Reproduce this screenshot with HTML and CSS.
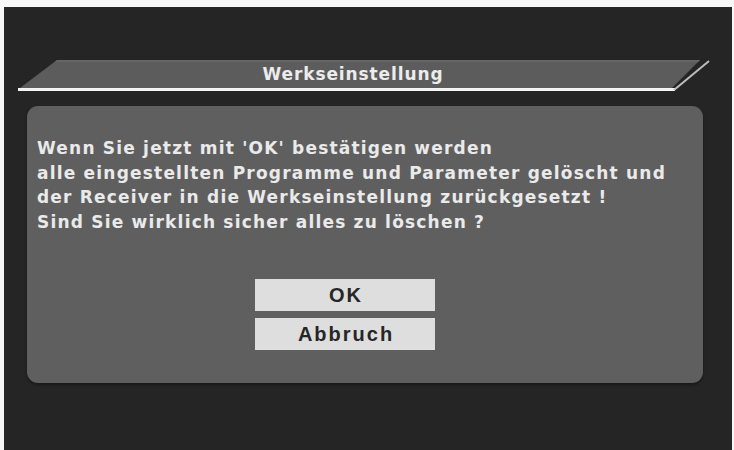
FILE: index.html
```html
<!DOCTYPE html>
<html lang="de">
<head>
<meta charset="utf-8">
<title>Werkseinstellung</title>
<link rel="stylesheet" href="styles.css">
</head>
<body>
<div class="screen">
  <div class="header">
    <svg class="header-bg" width="728" height="36" viewBox="0 0 728 36" aria-hidden="true">
      <polygon points="53,0 696,0 668,28 16,28" fill="#5c5c5c"/>
      <polygon points="53,0 696,0 694,2 51,2" fill="#666"/>
      <line x1="14" y1="29.5" x2="671" y2="29.5" stroke="#f4f4f4" stroke-width="3"/>
      <line x1="670" y1="30" x2="705" y2="1" stroke="#bdbdbd" stroke-width="2"/>
    </svg>
    <span class="title">Werkseinstellung</span>
  </div>
  <div class="panel">
    <p class="message">Wenn Sie jetzt mit 'OK' bestätigen werden<br>alle eingestellten Programme und Parameter gelöscht und<br>der Receiver in die Werkseinstellung zurückgesetzt !<br>Sind Sie wirklich sicher alles zu löschen ?</p>
    <div class="buttons">
      <div class="btn">OK</div>
      <div class="btn">Abbruch</div>
    </div>
  </div>
</div>
</body>
</html>
```

FILE: styles.css
```css
html, body {
  margin: 0;
  padding: 0;
  background: #f6f6f6;
}
.screen {
  margin: 7px 0 0 4px;
  width: 728px;
  height: 443px;
  background: #252525;
  overflow: hidden;
  padding-top: 53px;
  box-sizing: border-box;
}
.header {
  position: relative;
  height: 31px;
  display: flex;
  align-items: center;
  justify-content: center;
}
.header-bg {
  position: absolute;
  left: 0;
  top: 0;
}
.title {
  position: relative;
  font-family: "DejaVu Sans", sans-serif;
  font-weight: bold;
  font-size: 17px;
  letter-spacing: 0.9px;
  color: #ececec;
  margin-right: 30px;
  margin-top: -3px;
}
.panel {
  margin: 15px 0 0 23px;
  width: 676px;
  height: 277px;
  background: #5f5f5f;
  border-radius: 11px;
  box-shadow: 0 2px 3px rgba(0,0,0,0.35);
  padding: 30px 0 0 10px;
  box-sizing: border-box;
}
.message {
  margin: 0;
  font-family: "DejaVu Sans", sans-serif;
  font-weight: bold;
  font-size: 17px;
  line-height: 24.5px;
  letter-spacing: 1.2px;
  color: #eaeaea;
}
.buttons {
  margin: 45px 0 0 218px;
  width: 180px;
  display: flex;
  flex-direction: column;
  gap: 7px;
}
.btn {
  height: 32px;
  background: #dedede;
  display: flex;
  align-items: center;
  justify-content: center;
  font-family: "Liberation Sans", Arial, sans-serif;
  font-weight: bold;
  font-size: 20px;
  letter-spacing: 2px;
  text-indent: 2px;
  color: #262626;
}
```
